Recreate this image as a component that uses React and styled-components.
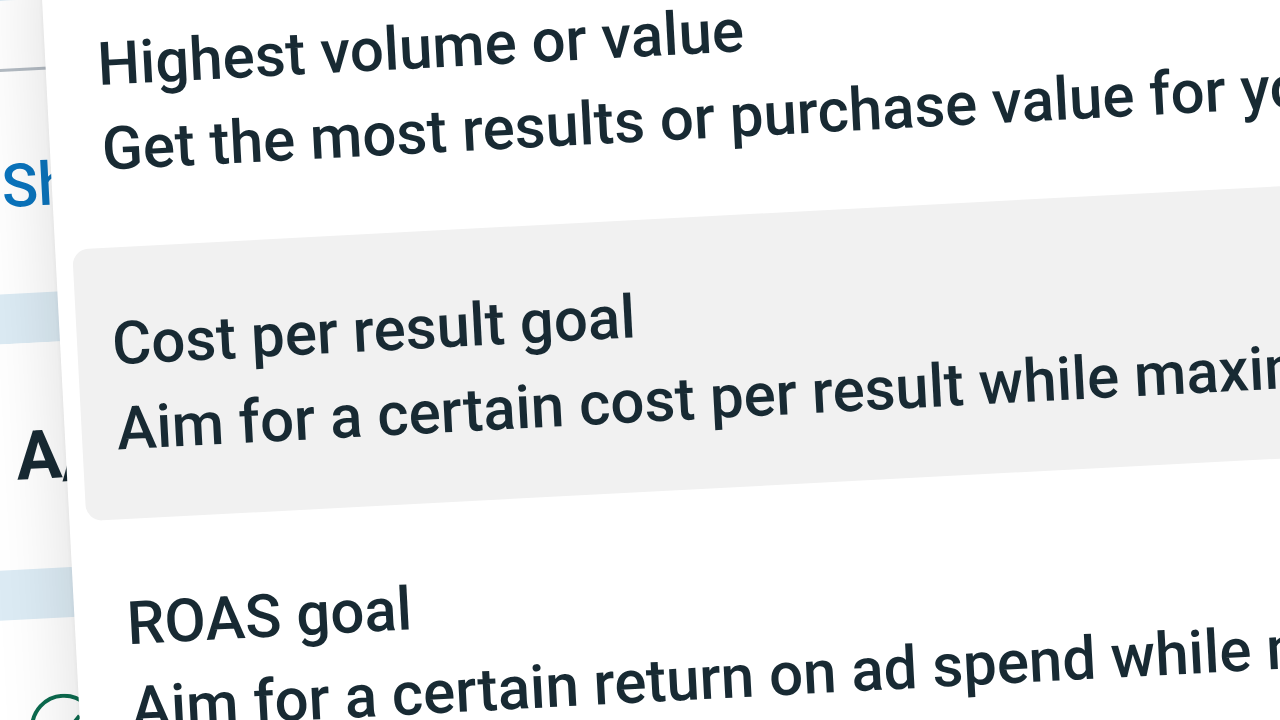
import React from 'react'
import styled, {createGlobalStyle} from 'styled-components'

const options = [
	{
		title: 'Highest volume or value',
		text: 'Get the most results or purchase value for your budget.',
	},
	{
		title: 'Cost per result goal',
		text: 'Aim for a certain cost per result while maximizing the volume.',
		active: true,
	},
	{
		title: 'ROAS goal',
		text: 'Aim for a certain return on ad spend while maximizing value.',
	},
]

const App = () => {
	return (
		<Page>
			<GlobalStyle />
			<Scene>
				<Band />
				<Section $height={293}>
					<FieldLine />
					<Link href="#options">Show more options</Link>
				</Section>
				<Band />
				<Section $height={226}>
					<Heading>A/B test</Heading>
				</Section>
				<Band />
				<Section $height={226}>
					<CheckIcon viewBox="0 0 68 68" aria-hidden="true">
						<circle cx="34" cy="34" r="32" />
						<path d="M20 35l10 10 20-22" />
					</CheckIcon>
				</Section>
				<Menu aria-label="Bid strategy">
					{options.map(({title, text, active}) => (
						<Option key={title} type="button" $active={active}>
							<Line>{title}</Line>
							<Line>{text}</Line>
						</Option>
					))}
				</Menu>
			</Scene>
		</Page>
	)
}

export default App

const GlobalStyle = createGlobalStyle`
	* {
		box-sizing: border-box;
	}

	body {
		margin: 0;
		background: #ffffff;
		color: #182a33;
		font-family: Roboto, "Noto Sans", sans-serif;
	}
`
const Page = styled.main`
	height: 100vh;
	overflow: hidden;
`
const Scene = styled.div`
	position: relative;
	margin: -49px 0 0 -60px;
	transform: rotate(-3deg);
	transform-origin: 60px 49px;
`
const Band = styled.div`
	height: 50px;
	background: #dcebf4;
`
const Section = styled.section`
	min-height: ${({$height}) => $height}px;
	padding-left: 52px;
	background: #ffffff;
`
const FieldLine = styled.hr`
	height: 3px;
	margin: 0 0 0 -52px;
	border: 0;
	background: #b4bcc4;
	position: relative;
	top: 68px;
`
const Link = styled.a`
	display: block;
	padding-top: 141px;
	color: #0a74bd;
	font-size: 60px;
	font-weight: 500;
	line-height: 84px;
	text-decoration: none;
	white-space: nowrap;
`
const Heading = styled.h2`
	margin: 0;
	padding-top: 71px;
	font-size: 68px;
	font-weight: 700;
	line-height: 84px;
	white-space: nowrap;
`
const CheckIcon = styled.svg`
	display: block;
	width: 68px;
	height: 68px;
	margin-top: 76px;
	fill: none;
	stroke: #0c6b4f;
	stroke-width: 4;
`
const Menu = styled.div`
	position: absolute;
	top: 0;
	left: 102px;
	right: -120px;
	display: flex;
	flex-direction: column;
	gap: 8px;
	padding: 22px 17px;
	background: #ffffff;
	box-shadow: 0 0 80px rgba(0, 0, 0, 0.14), 0 0 4px rgba(0, 0, 0, 0.06);
`
const Option = styled.button`
	display: flex;
	flex-direction: column;
	padding: 54px 35px 48px;
	border: 0;
	border-radius: 16px;
	background: ${({$active}) => ($active ? '#f1f1f1' : 'transparent')};
	color: inherit;
	font-family: inherit;
	font-size: 60px;
	font-weight: 500;
	line-height: 85px;
	text-align: left;
	overflow: hidden;
`
const Line = styled.span`
	white-space: nowrap;
`
